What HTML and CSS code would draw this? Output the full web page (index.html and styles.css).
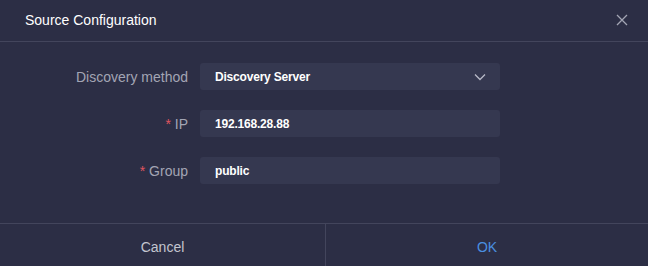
FILE: index.html
```html
<!DOCTYPE html>
<html lang="en">
<head>
  <meta charset="UTF-8" />
  <title>Source Configuration</title>
  <link rel="stylesheet" href="styles.css">
</head>
<body>
  <div class="dialog">
    <header class="dialog-header">
      <h1>Source Configuration</h1>
      <button class="close" aria-label="Close">
        <svg width="12" height="12" viewBox="0 0 12 12"><path d="M1 1L11 11M11 1L1 11" stroke="#a3a5b4" stroke-width="1.3" fill="none"/></svg>
      </button>
    </header>

    <section class="form">
      <div class="row">
        <label>Discovery method</label>
        <div class="field select">
          <span>Discovery Server</span>
          <svg width="12" height="8" viewBox="0 0 12 8"><path d="M1 1.5L6 6.5L11 1.5" stroke="#b7b9c7" stroke-width="1.3" fill="none"/></svg>
        </div>
      </div>
      <div class="row">
        <label><span class="req">*</span> IP</label>
        <div class="field">192.168.28.88</div>
      </div>
      <div class="row">
        <label><span class="req">*</span> Group</label>
        <div class="field">public</div>
      </div>
    </section>

    <footer class="dialog-footer">
      <button class="cancel">Cancel</button>
      <button class="ok">OK</button>
    </footer>
  </div>
</body>
</html>
```

FILE: styles.css
```css
* {
  box-sizing: border-box;
  margin: 0;
  padding: 0;
}

html, body {
  height: 100%;
}

body {
  font-family: "Liberation Sans", Arial, sans-serif;
  background: #2c2e45;
  color: #fff;
}

.dialog {
  height: 266px;
  display: flex;
  flex-direction: column;
}

.dialog-header {
  height: 42px;
  display: flex;
  align-items: center;
  justify-content: space-between;
  padding: 0 20px 2px 25px;
  border-bottom: 1px solid #43455c;
}

.dialog-header h1 {
  font-size: 14px;
  font-weight: normal;
  color: #fff;
}

.close {
  background: none;
  border: none;
  display: flex;
  cursor: pointer;
}

.form {
  flex: 1;
  display: flex;
  flex-direction: column;
  gap: 20px;
  padding-top: 21px;
}

.row {
  display: flex;
  align-items: center;
  height: 27px;
}

.row label {
  width: 188px;
  text-align: right;
  font-size: 14px;
  color: #a3a5b4;
  margin-right: 12px;
}

.req {
  color: #e0555f;
}

.field {
  width: 300px;
  height: 27px;
  background: #353850;
  border-radius: 3px;
  display: flex;
  align-items: center;
  padding: 0 14px 0 15px;
  font-size: 12px;
  font-weight: bold;
  letter-spacing: -0.2px;
  color: #fff;
}

.select {
  justify-content: space-between;
}

.dialog-footer {
  height: 43px;
  display: flex;
  border-top: 1px solid #43455c;
}

.dialog-footer button {
  background: none;
  border: none;
  font-family: inherit;
  font-size: 14px;
  padding-top: 3px;
  cursor: pointer;
}

.cancel {
  flex: 0 0 326px;
  color: #c3c5cf;
  border-right: 1px solid #43455c !important;
}

.ok {
  flex: 1;
  color: #4a8fe0;
}
```
